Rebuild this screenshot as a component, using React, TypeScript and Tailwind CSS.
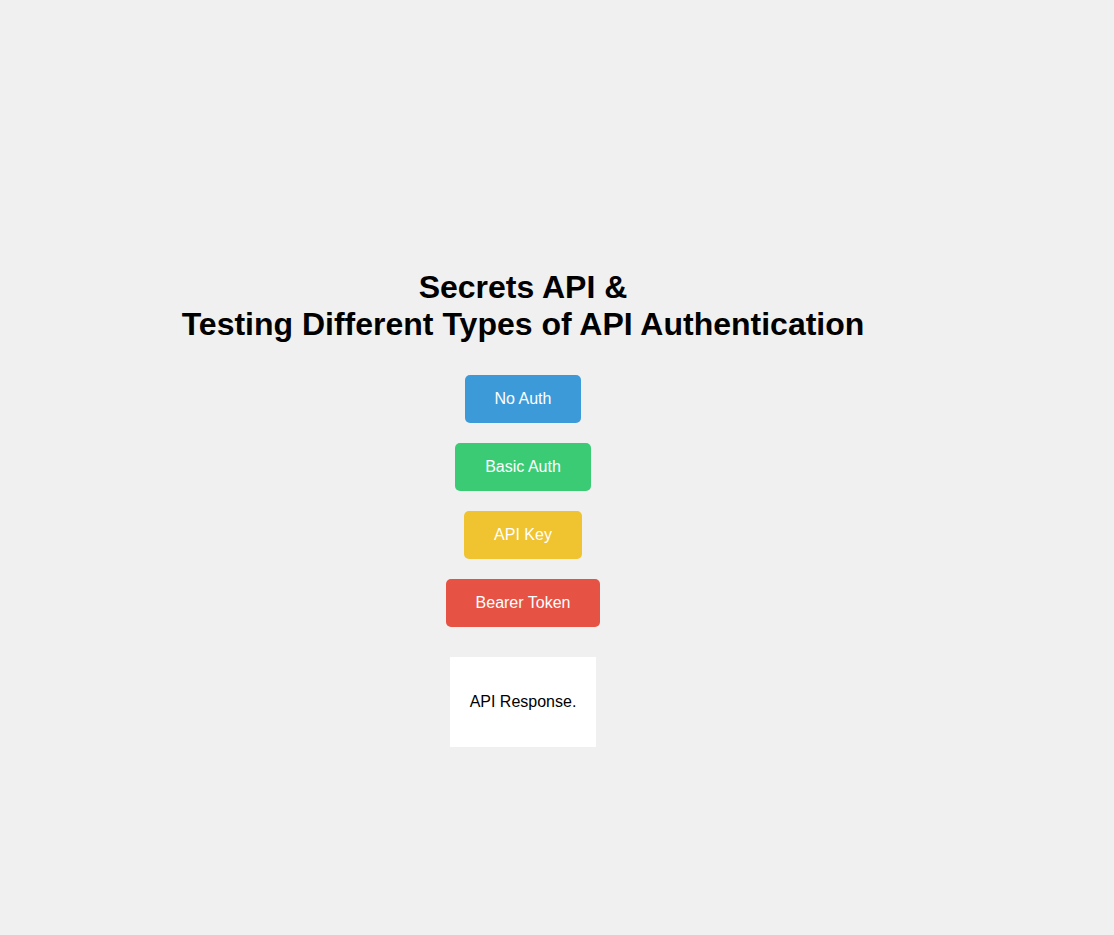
import React from "react";

export default function App() {
  const btn =
    "px-[30px] h-[48px] rounded-[5px] text-white text-[16px] leading-[18px]";
  return (
    <div className="min-h-[935px] w-full bg-[#f0f0f0] font-['Liberation_Sans',Arial,sans-serif] text-black">
      <div className="w-[1046px] flex flex-col items-center pt-[269px]">
        <h1 className="text-[32px] font-bold leading-[37px] text-center">
          Secrets API &amp;
          <br />
          Testing Different Types of API Authentication
        </h1>
        <div className="flex flex-col items-center gap-[20px] mt-[32px]">
          <button className={`${btn} bg-[#3d9ad9]`}>No Auth</button>
          <button className={`${btn} bg-[#3bcb75]`}>Basic Auth</button>
          <button className={`${btn} bg-[#f0c330]`}>API Key</button>
          <button className={`${btn} bg-[#e65244]`}>Bearer Token</button>
        </div>
        <div className="mt-[30px] bg-white px-[20px] h-[90px] flex items-center">
          <p className="text-[16px] leading-[18px]">API Response.</p>
        </div>
      </div>
    </div>
  );
}
